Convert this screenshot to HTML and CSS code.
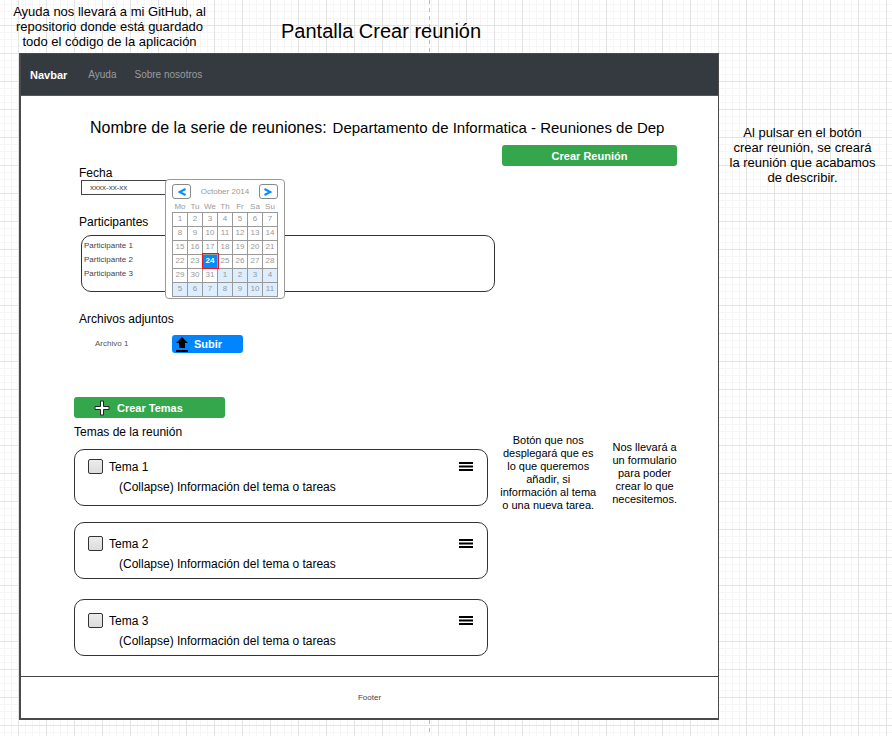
FILE: index.html
```html
<!DOCTYPE html>
<html lang="es">
<head>
<meta charset="utf-8">
<title>Pantalla Crear reunión</title>
<link rel="stylesheet" href="styles.css">
</head>
<body>
<header class="top">
  <p class="note">Ayuda nos llevará a mi GitHub, al<br>repositorio donde está guardado<br>todo el código de la aplicación</p>
  <h1 class="title">Pantalla Crear reunión</h1>
</header>
<div class="canvas">
  <div class="window">
    <nav class="navbar">
      <a class="brand" href="#">Navbar</a>
      <a class="link" href="#">Ayuda</a>
      <a class="link" href="#">Sobre nosotros</a>
    </nav>
    <main class="main">
      <h2 class="series"><span>Nombre de la serie de reuniones:</span> <span class="series-name">Departamento de Informatica - Reuniones de Dep</span></h2>
      <div class="actions"><button class="btn btn-wide" type="button">Crear Reunión</button></div>

      <div class="field date-field">
        <label class="label" for="fecha">Fecha</label>
        <input class="date" id="fecha" type="text" value="xxxx-xx-xx">
        <div class="calendar">
          <div class="cal-head">
            <button class="cal-nav" type="button" aria-label="Mes anterior"><svg viewBox="0 0 8 8"><path d="M7.500 1 1.500 4l6 3"/></svg></button>
            <span>October 2014</span>
            <button class="cal-nav" type="button" aria-label="Mes siguiente"><svg viewBox="0 0 8 8"><path d="m.5 1 6 3-6 3"/></svg></button>
          </div>
          <table class="days">
            <thead><tr><th>Mo</th><th>Tu</th><th>We</th><th>Th</th><th>Fr</th><th>Sa</th><th>Su</th></tr></thead>
            <tbody>
              <tr><td>1</td><td>2</td><td>3</td><td>4</td><td>5</td><td>6</td><td>7</td></tr>
              <tr><td>8</td><td>9</td><td>10</td><td>11</td><td>12</td><td>13</td><td>14</td></tr>
              <tr><td>15</td><td>16</td><td>17</td><td>18</td><td>19</td><td>20</td><td>21</td></tr>
              <tr><td>22</td><td>23</td><td class="today">24</td><td>25</td><td>26</td><td>27</td><td>28</td></tr>
              <tr><td>29</td><td>30</td><td>31</td><td class="next">1</td><td class="next">2</td><td class="next">3</td><td class="next">4</td></tr>
              <tr><td class="next">5</td><td class="next">6</td><td class="next">7</td><td class="next">8</td><td class="next">9</td><td class="next">10</td><td class="next">11</td></tr>
            </tbody>
          </table>
        </div>
      </div>

      <section class="field">
        <h3 class="label">Participantes</h3>
        <ul class="box people">
          <li>Participante 1</li>
          <li>Participante 2</li>
          <li>Participante 3</li>
        </ul>
      </section>

      <section class="field">
        <h3 class="label">Archivos adjuntos</h3>
        <div class="files">
          <span class="file">Archivo 1</span>
          <button class="btn upload" type="button"><svg viewBox="0 0 12 15"><path d="M6 0 12 6H9v5H3V6H0zM0 13h12v2H0z"/></svg>Subir</button>
        </div>
      </section>

      <button class="btn add" type="button"><svg viewBox="0 0 16 16"><path d="M6.500 1h3v5.500H15v3H9.500V15h-3V9.500H1v-3h5.500z"/></svg>Crear Temas</button>
      <h3 class="label topics-label">Temas de la reunión</h3>
      <div class="topics">
        <div class="topic-list">
          <article class="box topic topic-first">
            <div class="topic-head"><input class="check" type="checkbox" id="t1"><label for="t1">Tema 1</label><button class="menu" type="button" aria-label="Opciones"><svg viewBox="0 0 14 9"><path d="M0 0h14v2H0zM0 3.500h14v2H0zM0 7h14v2H0z"/></svg></button></div>
            <p class="info">(Collapse) Información del tema o tareas</p>
          </article>
          <article class="box topic">
            <div class="topic-head"><input class="check" type="checkbox" id="t2"><label for="t2">Tema 2</label><button class="menu" type="button" aria-label="Opciones"><svg viewBox="0 0 14 9"><path d="M0 0h14v2H0zM0 3.500h14v2H0zM0 7h14v2H0z"/></svg></button></div>
            <p class="info">(Collapse) Información del tema o tareas</p>
          </article>
          <article class="box topic topic-last">
            <div class="topic-head"><input class="check" type="checkbox" id="t3"><label for="t3">Tema 3</label><button class="menu" type="button" aria-label="Opciones"><svg viewBox="0 0 14 9"><path d="M0 0h14v2H0zM0 3.500h14v2H0zM0 7h14v2H0z"/></svg></button></div>
            <p class="info">(Collapse) Información del tema o tareas</p>
          </article>
        </div>
        <div class="hints">
          <p class="hint">Botón que nos<br>desplegará que es<br>lo que queremos<br>añadir, si<br>información al tema<br>o una nueva tarea.</p>
          <p class="hint">Nos llevará a<br>un formulario<br>para poder<br>crear lo que<br>necesitemos.</p>
        </div>
      </div>
    </main>
    <footer class="footer">Footer</footer>
  </div>
  <aside class="aside"><p class="note">Al pulsar en el botón<br>crear reunión, se creará<br>la reunión que acabamos<br>de describir.</p></aside>
</div>
</body>
</html>
```
FILE: styles.css
```css
* { box-sizing: border-box; }

html {
  min-height: 100%;
  background-color: #fff;
  background-image:
    repeating-linear-gradient(to bottom, #bbb 0 4px, transparent 4px 8px),
    linear-gradient(to right, #e3e3e3 1px, transparent 1px),
    linear-gradient(to bottom, #e3e3e3 1px, transparent 1px),
    linear-gradient(to right, #f6f6f6 1px, transparent 1px),
    linear-gradient(to bottom, #f6f6f6 1px, transparent 1px);
  background-size: 1px 100%, 28px 28px, 28px 28px, 7px 7px, 7px 7px;
  background-position: 429px 0, 18px 25px, 18px 25px, 18px 25px, 18px 25px;
  background-repeat: no-repeat, repeat, repeat, repeat, repeat;
}

body {
  margin: 0;
  font-family: "Liberation Sans", Arial, sans-serif;
  font-size: 12px;
  line-height: 14px;
  color: #000;
}

h1, h2, h3, p, ul { margin: 0; padding: 0; font-weight: 400; }
ul { list-style: none; }
a { text-decoration: none; }
button, input { font-family: inherit; margin: 0; }
button { cursor: pointer; }

.top { display: flex; height: 53px; }
.top .note { width: 219px; padding-top: 4px; }
.note { font-size: 13px; line-height: 15px; text-align: center; white-space: nowrap; }
.title { padding: 19px 0 0 62px; font-size: 20px; line-height: 24px; }

.canvas { display: grid; grid-template-columns: minmax(0, 1fr) 173px; align-items: start; padding-left: 19px; }
.window { border: 2px solid #4a4a4a; border-width: 1px 1px 2px 2px; background: #fff; }

.navbar {
  display: flex;
  align-items: center;
  height: 42px;
  padding-left: 9px;
  background: #353a41;
  border-bottom: 1px solid #55595e;
}
.brand { margin-right: 21px; color: #fff; font-size: 11px; font-weight: 700; }
.link { margin-right: 18px; color: #9a9c9f; font-size: 10px; }

.main { padding: 22px 41px 20px 53px; }
.series { display: flex; gap: 6px; padding-left: 16px; font-size: 16px; line-height: 20px; white-space: nowrap; }
.series-name { font-size: 15px; }
.actions { display: flex; justify-content: flex-end; margin-top: 7px; }

.btn {
  display: flex;
  align-items: center;
  justify-content: center;
  height: 21px;
  padding: 0;
  border: 0;
  border-radius: 3px;
  background: #34a64c;
  color: #fff;
  font-size: 11px;
  font-weight: 700;
}
.btn-wide { width: 175px; }

.field { margin-bottom: 20px; padding-left: 5px; }
.label { display: block; font-size: 12px; line-height: 14px; }
.date-field { position: relative; }
.date {
  display: block;
  width: 92px;
  height: 15px;
  margin-left: 2px;
  padding: 0 8px;
  border: 1px solid #444;
  border-radius: 0;
  background: #fff;
  color: #444;
  font-size: 8px;
}

.box { border: 1px solid #333; border-radius: 10px; background: #fff; }
.people {
  width: 414px;
  height: 57px;
  margin: 6px 0 0 2px;
  padding: 3px 2px;
  color: #444;
  font-size: 8px;
}

.calendar {
  position: absolute;
  z-index: 1;
  top: 13px;
  left: 91px;
  width: 120px;
  height: 120px;
  padding: 4px 6px;
  border: 1px solid #999;
  border-radius: 4px;
  background: #fff;
  color: #999;
  font-size: 8px;
}
.cal-head { display: flex; align-items: center; justify-content: space-between; height: 15px; font-size: 8px; }
.cal-nav { width: 19px; height: 15px; padding: 0; border: 1px solid #888; border-radius: 3px; background: #fff; }
.cal-nav svg { display: block; width: 8px; height: 8px; margin: 0 auto; fill: none; stroke: #008cff; stroke-width: 2; }
.days { width: 106px; border-collapse: collapse; table-layout: fixed; text-align: center; line-height: 10px; }
.days th { height: 13px; padding: 0; font-weight: 400; vertical-align: bottom; }
.days td { height: 14px; padding: 0; border: 1px solid #999; }
.days .next { background: #dceeff; }
.days .today { position: relative; outline: 1px solid #e5141e; background: #008cff; color: #fff; font-weight: 700; }

.files { display: flex; align-items: center; margin-top: 9px; }
.file { width: 93px; padding-left: 16px; color: #555; font-size: 8px; }
.upload { justify-content: flex-start; gap: 6px; width: 71px; height: 18px; padding-left: 4px; background: #0085ff; }
.upload svg { width: 12px; height: 15px; }

.add { justify-content: flex-start; gap: 7px; width: 151px; margin-top: 44px; padding-left: 20px; }
.add svg { width: 16px; height: 16px; fill: #fff; stroke: #222; }
.topics-label { margin-top: 7px; }

.topics { display: flex; justify-content: space-between; margin-top: 10px; }
.topic-list { display: flex; flex-direction: column; gap: 16px; width: 414px; }
.topic { height: 57px; padding: 13px 14px 0 13px; }
.topic-first { padding-top: 9px; }
.topic-last { margin-top: 4px; }
.topic-head { display: flex; align-items: center; gap: 6px; height: 15px; }
.check {
  appearance: none;
  width: 15px;
  height: 15px;
  border: 1px solid #333;
  border-radius: 2px;
  background: linear-gradient(#ececec, #dcdcdc);
}
.menu { margin-left: auto; padding: 0; border: 0; background: none; }
.menu svg { display: block; width: 14px; height: 9px; }
.info { margin-top: 6px; padding-left: 31px; }
.hints { display: flex; align-items: flex-start; gap: 16px; margin-top: -15px; }
.hint { font-size: 11px; line-height: 13px; text-align: center; white-space: nowrap; }
.hint + .hint { margin-top: 7px; }

.footer { height: 42px; border-top: 1px solid #444; line-height: 42px; text-align: center; color: #444; font-size: 8px; }
.aside { padding: 72px 6px 0 0; }
```
